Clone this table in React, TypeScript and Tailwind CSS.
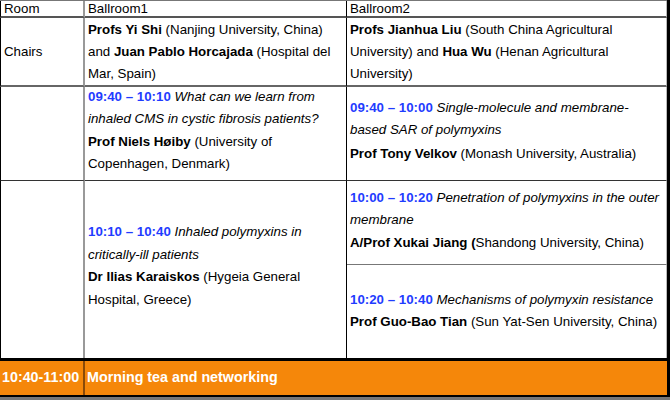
import React from 'react';

const font = { fontFamily: '"Liberation Sans", Arial, sans-serif' };

const Time: React.FC<{ children: React.ReactNode }> = ({ children }) => (
  <span className="font-bold text-[#1f3cff]">{children}</span>
);

export default function App() {
  return (
    <div style={font} className="w-[670px] h-[400px] bg-white text-[13.3px] text-black overflow-hidden">
      <div className="w-[670px] h-[397px] border-r-[3px] border-black">
        <div className="grid grid-cols-[85px_262px_320px] grid-rows-[17px_69px_94px_84px_93px] border-t border-[#777]">
          {/* Header */}
          <div className="border-l border-black border-r-2 border-r-[#999] border-b-2 border-b-[#555] pl-[3px] leading-[16px]">Room</div>
          <div className="border-r-[1.5px] border-r-black border-b-2 border-b-[#555] pl-[3px] leading-[16px]">Ballroom1</div>
          <div className="border-r border-r-[#bbb] border-b-2 border-b-[#555] pl-[3px] leading-[16px]">Ballroom2</div>

          {/* Chairs */}
          <div className="border-l border-black border-r-2 border-r-[#999] border-b-2 border-b-[#666] pl-[3px] flex items-center leading-[22px]">Chairs</div>
          <div className="border-r-[1.5px] border-r-black border-b-2 border-b-[#666] pl-[3px] pr-1 flex items-center leading-[22px]">
            <p>
              <b>Profs Yi Shi</b> (Nanjing University, China) and <b>Juan Pablo Horcajada</b> (Hospital del Mar, Spain)
            </p>
          </div>
          <div className="border-r border-r-[#bbb] border-b-2 border-b-[#666] pl-[3px] pr-1 flex items-center leading-[22px]">
            <p>
              <b>Profs Jianhua Liu</b> (South China Agricultural University) and <b>Hua Wu</b> (Henan Agricultural University)
            </p>
          </div>

          {/* Session 1 */}
          <div className="border-l border-black border-r-2 border-r-[#999] border-b border-b-[#333]"></div>
          <div className="border-r-[1.5px] border-r-black border-b border-b-[#333] pl-[3px] pr-1 pb-[7px] flex flex-col justify-center leading-[22px]">
            <p>
              <Time>09:40 – 10:10</Time> <i>What can we learn from inhaled CMS in cystic fibrosis patients?</i>
            </p>
            <p className="mt-[1px]">
              <b>Prof Niels Høiby</b> (University of Copenhagen, Denmark)
            </p>
          </div>
          <div className="border-r border-r-[#bbb] border-b border-b-[#333] pl-[3px] pr-1 pb-[6px] flex flex-col justify-center leading-[22px]">
            <p>
              <Time>09:40 – 10:00</Time> <i>Single-molecule and membrane-based SAR of polymyxins</i>
            </p>
            <p className="mt-[2px]">
              <b>Prof Tony Velkov</b> (Monash University, Australia)
            </p>
          </div>

          {/* Session 2 */}
          <div className="row-span-2 border-l border-black border-r-2 border-r-[#999]"></div>
          <div className="row-span-2 border-r-[1.5px] border-r-black pl-[3px] pr-1 pb-[7px] flex flex-col justify-center leading-[22.5px]">
            <p>
              <Time>10:10 – 10:40</Time> <i>Inhaled polymyxins in critically-ill patients</i>
            </p>
            <p>
              <b>Dr Ilias Karaiskos</b> (Hygeia General Hospital, Greece)
            </p>
          </div>
          <div className="border-r border-r-[#bbb] border-b border-b-[#777] pl-[3px] pr-1 pb-[4px] flex flex-col justify-center leading-[22px]">
            <p>
              <Time>10:00 – 10:20</Time> <i>Penetration of polymyxins in the outer membrane</i>
            </p>
            <p className="mt-[1px]">
              <b>A/Prof Xukai Jiang (</b>Shandong University, China)
            </p>
          </div>
          <div className="border-r border-r-[#bbb] pl-[3px] pr-1 pb-[2px] flex flex-col justify-center leading-[22px]">
            <p>
              <Time>10:20 – 10:40</Time> <i>Mechanisms of polymyxin resistance</i>
            </p>
            <p>
              <b>Prof Guo-Bao Tian</b> (Sun Yat-Sen University, China)
            </p>
          </div>
        </div>

        {/* Break */}
        <div className="flex h-[40px] bg-[#f5870a] border-y-[3px] border-black text-white font-bold text-[14.3px]">
          <div className="w-[85px] border-r-2 border-r-[#8a4a08] pl-[2px] flex items-center">10:40-11:00</div>
          <div className="pl-[2px] flex items-center">Morning tea and networking</div>
        </div>
      </div>
      <div className="h-[3px] bg-[#777]"></div>
    </div>
  );
}
